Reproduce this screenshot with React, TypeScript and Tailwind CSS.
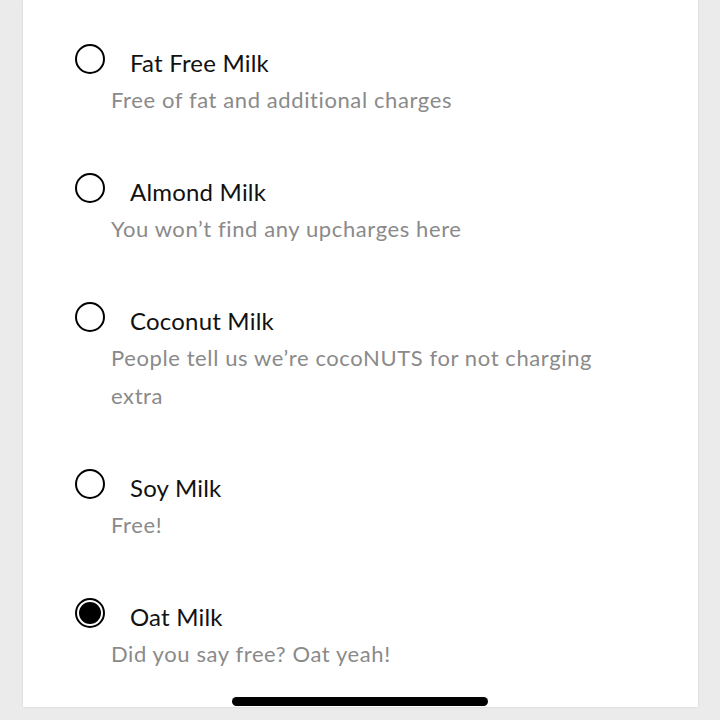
import React, { useState } from 'react';

const options = [
    { id: 'fatfree', title: 'Fat Free Milk', desc: 'Free of fat and additional charges' },
    { id: 'almond', title: 'Almond Milk', desc: 'You won\u2019t find any upcharges here' },
    { id: 'coconut', title: 'Coconut Milk', desc: 'People tell us we\u2019re cocoNUTS for not charging extra' },
    { id: 'soy', title: 'Soy Milk', desc: 'Free!' },
    { id: 'oat', title: 'Oat Milk', desc: 'Did you say free? Oat yeah!' },
];

const Radio: React.FC<{ checked: boolean }> = ({ checked }) => (
    <span className="flex h-[30px] w-[30px] shrink-0 items-center justify-center rounded-full border-2 border-black">
        {checked && <span className="h-[22px] w-[22px] rounded-full bg-black" />}
    </span>
);

export default function App() {
    const [selected, setSelected] = useState('oat');

    return (
        <div className="h-[720px] w-[720px] overflow-hidden bg-[#ebebeb]" style={{ fontFamily: 'Lato, "Open Sans", sans-serif' }}>
            {/* Sheet */}
            <div className="relative ml-[23px] h-[707px] w-[675px] bg-white pt-[44px] shadow-[0_0_2px_rgba(0,0,0,0.12)]">
                <div className="flex flex-col gap-[54px]">
                    {options.map((o) => (
                        <button
                            key={o.id}
                            onClick={() => setSelected(o.id)}
                            className="flex flex-col text-left"
                        >
                            <div className="flex items-start gap-[25px] pl-[52px]">
                                <Radio checked={selected === o.id} />
                                <span className="mt-[4px] text-[24px] leading-[30px] tracking-[0.2px] text-[#111]">{o.title}</span>
                            </div>
                            <p className="mt-[3px] pl-[88px] pr-[78px] text-[22px] leading-[38px] tracking-[0.6px] text-[#8a8a8a]">{o.desc}</p>
                        </button>
                    ))}
                </div>

                {/* Home indicator */}
                <div className="absolute bottom-[1px] left-[209px] h-[9px] w-[256px] rounded-full bg-black" />
            </div>
        </div>
    );
}
